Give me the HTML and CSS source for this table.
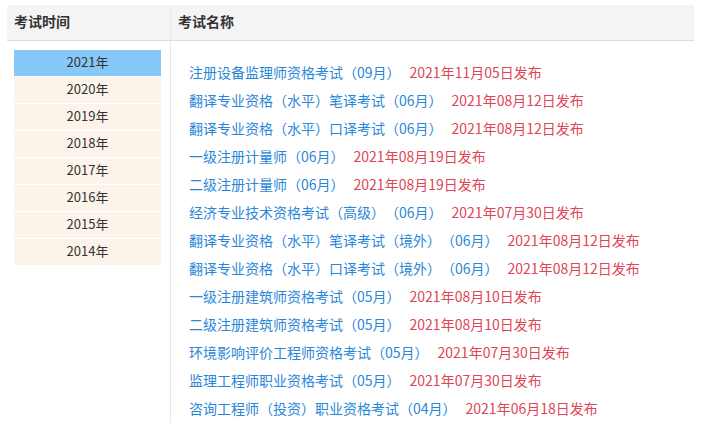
FILE: index.html
```html
<!DOCTYPE html>
<html lang="zh">
<head>
<meta charset="utf-8">
<title>考试</title>
<link rel="stylesheet" href="styles.css">
</head>
<body>
<div class="board">
  <div class="col col-years">
    <div class="head">考试时间</div>
    <ul class="years">
      <li class="year active">2021年</li>
      <li class="year">2020年</li>
      <li class="year">2019年</li>
      <li class="year">2018年</li>
      <li class="year">2017年</li>
      <li class="year">2016年</li>
      <li class="year">2015年</li>
      <li class="year">2014年</li>
    </ul>
  </div>
  <div class="col col-names">
    <div class="head">考试名称</div>
    <ul class="exams">
      <li><a class="name">注册设备监理师资格考试（09月）</a><span class="date">2021年11月05日发布</span></li>
      <li><a class="name">翻译专业资格（水平）笔译考试（06月）</a><span class="date">2021年08月12日发布</span></li>
      <li><a class="name">翻译专业资格（水平）口译考试（06月）</a><span class="date">2021年08月12日发布</span></li>
      <li><a class="name">一级注册计量师（06月）</a><span class="date">2021年08月19日发布</span></li>
      <li><a class="name">二级注册计量师（06月）</a><span class="date">2021年08月19日发布</span></li>
      <li><a class="name">经济专业技术资格考试（高级）（06月）</a><span class="date">2021年07月30日发布</span></li>
      <li><a class="name">翻译专业资格（水平）笔译考试（境外）（06月）</a><span class="date">2021年08月12日发布</span></li>
      <li><a class="name">翻译专业资格（水平）口译考试（境外）（06月）</a><span class="date">2021年08月12日发布</span></li>
      <li><a class="name">一级注册建筑师资格考试（05月）</a><span class="date">2021年08月10日发布</span></li>
      <li><a class="name">二级注册建筑师资格考试（05月）</a><span class="date">2021年08月10日发布</span></li>
      <li><a class="name">环境影响评价工程师资格考试（05月）</a><span class="date">2021年07月30日发布</span></li>
      <li><a class="name">监理工程师职业资格考试（05月）</a><span class="date">2021年07月30日发布</span></li>
      <li><a class="name">咨询工程师（投资）职业资格考试（04月）</a><span class="date">2021年06月18日发布</span></li>
    </ul>
  </div>
</div>
</body>
</html>
```

FILE: styles.css
```css
* { box-sizing: border-box; }
html, body { margin: 0; padding: 0; background: #fff; }
body {
  font-family: "Noto Sans CJK SC", "Noto Sans", sans-serif;
  color: #333;
  text-spacing-trim: space-all;
  font-feature-settings: "chws" 0, "halt" 0;
}
.board {
  display: flex;
  margin: 5px 0 0 7px;
  width: 687px;
  height: 418px;
}
.col { display: flex; flex-direction: column; }
.col-years { width: 164px; border-right: 1px solid #e8e8e8; }
.col-names { flex: 1; }
.head {
  height: 36px;
  background: #f4f4f4;
  border-bottom: 1px solid #dedede;
  font-size: 14px;
  font-weight: bold;
  line-height: 33px;
  color: #333;
  padding-left: 7px;
}
ul { list-style: none; margin: 0; padding: 0; }
.years { padding: 9px 9px 0 7px; }
.year {
  height: 26px;
  margin-bottom: 1px;
  background: #fcf3ea;
  text-align: center;
  font-size: 13px;
  line-height: 23px;
  color: #333;
}
.year.active { background: #86c8f7; }
.exams { padding: 17px 0 0 18px; }
.exams li {
  height: 28px;
  line-height: 28px;
  font-size: 14px;
  white-space: nowrap;
}
.name { color: #2a87d8; text-decoration: none; }
.date { color: #e04556; margin-left: 9px; }
```
